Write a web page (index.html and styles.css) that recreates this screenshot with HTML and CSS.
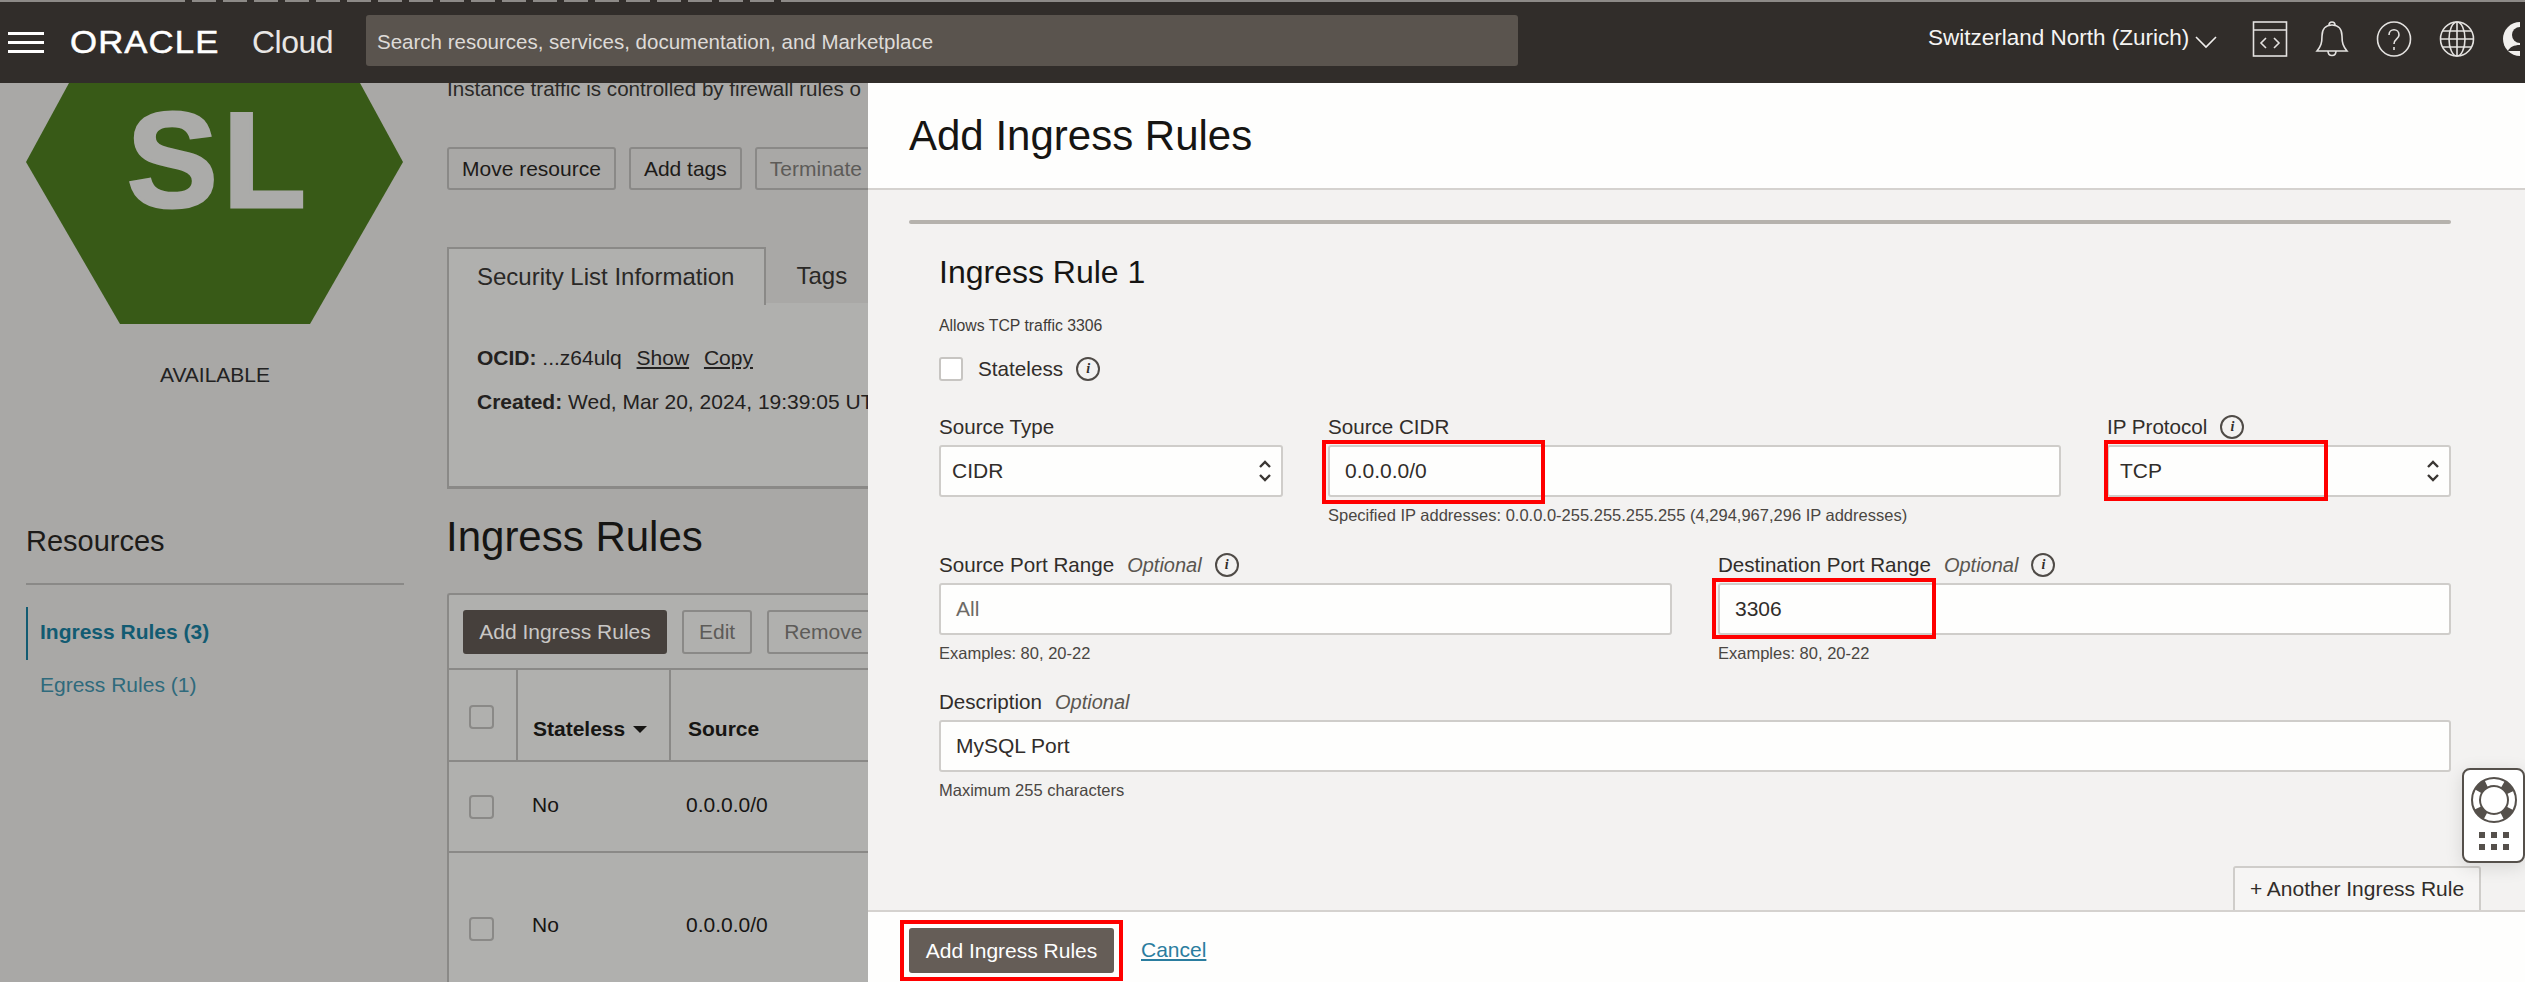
FILE: index.html
```html
<!DOCTYPE html>
<html lang="en">
<head>
<meta charset="utf-8">
<title>Add Ingress Rules</title>
<link rel="stylesheet" href="styles.css">
</head>
<body>
<div class="page">
  <header class="topbar">
    <div class="strip"></div>
    <div class="hamburger"><span></span><span></span><span></span></div>
    <div class="brand"><span class="brand-oracle">ORACLE</span><span class="brand-cloud">Cloud</span></div>
    <div class="search">Search resources, services, documentation, and Marketplace</div>
    <div class="region">Switzerland North (Zurich)
      <svg class="chev" width="22" height="14" viewBox="0 0 22 14"><path d="M1 2l10 10L21 2" fill="none" stroke="#f1efed" stroke-width="1.6"/></svg>
    </div>
    <div class="top-icons">
      <svg width="36" height="38" viewBox="0 0 36 38" fill="none" stroke="#e4e2e0" stroke-width="1.6"><rect x="1.5" y="2" width="33" height="34"/><path d="M1.5 10h33"/><path d="M14 18l-5 5 5 5M22 18l5 5-5 5"/></svg>
      <svg width="34" height="38" viewBox="0 0 34 38" fill="none" stroke="#e4e2e0" stroke-width="1.6"><path d="M2 31c4-5 5-8 5-15 0-7 4-11 10-11s10 4 10 11c0 7 1 10 5 15z"/><path d="M14 5c0-4 6-4 6 0M13 31c0 6 8 6 8 0"/></svg>
      <svg width="36" height="38" viewBox="0 0 36 38" fill="none" stroke="#e4e2e0" stroke-width="1.6"><ellipse cx="18" cy="19" rx="16.5" ry="17"/><path d="M13 15c0-7 10-7 10 0 0 4-5 4-5 9"/><path d="M18 27v3"/></svg>
      <svg width="36" height="38" viewBox="0 0 36 38" fill="none" stroke="#e4e2e0" stroke-width="1.6"><ellipse cx="18" cy="19" rx="16.5" ry="17"/><ellipse cx="18" cy="19" rx="8" ry="17"/><path d="M18 2v34M3 11h30M1.5 19h33M3 27h30"/></svg>
      <svg class="avatar" width="18" height="38" viewBox="0 0 18 38"><circle cx="18" cy="19" r="17" fill="#f1efed"/><circle cx="18" cy="15" r="8" fill="#312d2a"/><path d="M6 31c3-8 20-8 24 0" fill="#312d2a"/></svg>
    </div>
  </header>

  <div class="content">
    <aside class="left">
      <div class="hex-wrap">
        <svg class="hex" width="378" height="241" viewBox="0 0 378 241"><polygon points="43,0 334,0 377,79 284,241 94,241 0,79" fill="#385a17"/></svg>
        <span class="hex-text">SL</span>
      </div>
      <div class="status">AVAILABLE</div>
      <h2 class="res-title">Resources</h2>
      <nav class="res-nav">
        <a class="nav-item active">Ingress Rules (3)</a>
        <a class="nav-item">Egress Rules (1)</a>
      </nav>
    </aside>

    <main class="bg-main">
      <p class="intro">Instance traffic is controlled by firewall rules o</p>
      <div class="actions">
        <span class="btn">Move resource</span>
        <span class="btn">Add tags</span>
        <span class="btn muted">Terminate</span>
      </div>
      <div class="tabs">
        <span class="tab active">Security List Information</span>
        <span class="tab">Tags</span>
      </div>
      <div class="info">
        <p class="info-line"><b>OCID:</b> ...z64ulq <u class="lnk">Show</u> <u class="lnk">Copy</u></p>
        <p class="info-line"><b>Created:</b> Wed, Mar 20, 2024, 19:39:05 UT</p>
      </div>
      <h1 class="bg-h1">Ingress Rules</h1>
      <div class="table-panel">
        <div class="table-tools">
          <span class="btn dark">Add Ingress Rules</span>
          <span class="btn muted small">Edit</span>
          <span class="btn muted small">Remove</span>
        </div>
        <div class="t-row t-head">
          <div class="c c-check"><i class="cb"></i></div>
          <div class="c c-state">Stateless <i class="tri"></i></div>
          <div class="c c-src">Source</div>
        </div>
        <div class="t-row t-one">
          <div class="c c-check"><i class="cb"></i></div>
          <div class="c c-state">No</div>
          <div class="c c-src">0.0.0.0/0</div>
        </div>
        <div class="t-row t-two">
          <div class="c c-check"><i class="cb"></i></div>
          <div class="c c-state">No</div>
          <div class="c c-src">0.0.0.0/0</div>
        </div>
      </div>
    </main>

    <section class="modal">
      <div class="m-head"><h1>Add Ingress Rules</h1></div>
      <div class="m-body">
        <div class="rule-bar"></div>
        <h2 class="rule-title">Ingress Rule 1</h2>
        <p class="rule-sub">Allows TCP traffic 3306</p>
        <div class="stateless"><i class="box"></i><span>Stateless</span><span class="inf">i</span></div>

        <div class="row r3">
          <div class="f"><label>Source Type</label>
            <div class="ctl sel">CIDR<svg class="updown" width="14" height="24" viewBox="0 0 14 24" fill="none" stroke="#3a3633" stroke-width="2.4"><path d="M2 8l5-5 5 5M2 16l5 5 5-5"/></svg></div>
          </div>
          <div class="f"><label>Source CIDR</label>
            <div class="ctl txt"><span class="mark m-cidr"></span>0.0.0.0/0</div>
            <small>Specified IP addresses: 0.0.0.0-255.255.255.255 (4,294,967,296 IP addresses)</small>
          </div>
          <div class="f"><label>IP Protocol<span class="inf">i</span></label>
            <div class="ctl sel"><span class="mark m-ip"></span>TCP<svg class="updown" width="14" height="24" viewBox="0 0 14 24" fill="none" stroke="#3a3633" stroke-width="2.4"><path d="M2 8l5-5 5 5M2 16l5 5 5-5"/></svg></div>
          </div>
        </div>

        <div class="row r2">
          <div class="f"><label>Source Port Range<em>Optional</em><span class="inf">i</span></label>
            <div class="ctl txt ph">All</div>
            <small>Examples: 80, 20-22</small>
          </div>
          <div class="f"><label>Destination Port Range<em>Optional</em><span class="inf">i</span></label>
            <div class="ctl txt"><span class="mark m-port"></span>3306</div>
            <small>Examples: 80, 20-22</small>
          </div>
        </div>

        <div class="f desc"><label>Description<em>Optional</em></label>
          <div class="ctl txt">MySQL Port</div>
          <small>Maximum 255 characters</small>
        </div>

        <div class="another-row"><span class="another">+ Another Ingress Rule</span></div>
      </div>
      <div class="m-foot">
        <span class="submit-wrap"><span class="submit">Add Ingress Rules</span></span>
        <a class="cancel">Cancel</a>
      </div>
      <div class="help-widget">
        <svg width="46" height="46" viewBox="0 0 46 46"><circle cx="23" cy="23" r="18" fill="none" stroke="#55504b" stroke-width="10"/><circle cx="23" cy="23" r="18" fill="none" stroke="#fff" stroke-width="6" stroke-dasharray="17.3 11" stroke-dashoffset="8.65"/></svg>
        <div class="dots"><i></i><i></i><i></i><i></i><i></i><i></i></div>
      </div>
    </section>
  </div>
</div>
</body>
</html>
```
FILE: styles.css
```css
* { box-sizing: border-box; }
html, body { margin: 0; padding: 0; }
body { width: 2527px; height: 985px; overflow: hidden; font-family: "Liberation Sans", Arial, sans-serif; font-size: 21px; color: #161513; background: #fff; }
.page { width: 2525px; height: 982px; display: flex; flex-direction: column; overflow: hidden; background: #a9a8a6; }

.topbar { height: 83px; flex: none; background: #312d2a; padding-top: 2px; display: flex; align-items: center; color: #fff; position: relative; z-index: 3; }
.strip { position: absolute; left: 0; right: 0; top: 0; height: 2px; background-color: #8d8a87; background-image: repeating-linear-gradient(90deg, #312d2a 0 7px, transparent 7px 31px); background-size: 620px 2px; background-position: 185px 0; background-repeat: no-repeat; }
.hamburger { width: 36px; margin-left: 8px; display: flex; flex-direction: column; gap: 6px; }
.hamburger span { height: 3px; background: #fff; display: block; }
.brand { margin-left: 26px; width: 296px; display: flex; align-items: baseline; }
.brand-oracle { font-size: 31px; letter-spacing: 1px; color: #fff; width: 182px; display: block; transform: scaleX(1.12); transform-origin: left center; -webkit-text-stroke: .5px #fff; }
.brand-cloud { font-size: 32px; color: #e8e6e4; letter-spacing: -.5px; }
.search { width: 1152px; height: 51px; background: #5a544e; border-radius: 3px; display: flex; align-items: center; padding: 2px 0 0 11px; color: #dedbd8; font-size: 20.5px; margin-top: -4px; }
.region { margin-left: 410px; width: 300px; font-size: 22.5px; white-space: nowrap; display: flex; align-items: center; gap: 6px; margin-top: -10px; color: #f5f4f3; }
.chev { margin-top: 8px; }
.top-icons { margin-left: 24px; display: flex; gap: 27px; margin-top: -8px; }

.content { flex: 1; display: flex; min-height: 0; }
.left { width: 447px; flex: none; padding-left: 26px; padding-right: 43px; }
.hex-wrap { position: relative; height: 241px; }
.hex { display: block; }
.hex-text { position: absolute; left: 101px; top: 10px; font-size: 136px; line-height: 135px; font-weight: 700; color: #ababa9; letter-spacing: 5px; -webkit-text-stroke: 3px #ababa9; }
.status { text-align: center; margin-top: 40px; line-height: 22px; font-size: 21px; color: #222; }
.res-title { font-weight: 400; font-size: 29px; line-height: 32px; margin: 139px 0 0; padding-bottom: 26px; border-bottom: 2px solid #8a8987; color: #1d1b19; }
.res-nav { margin-top: 22px; display: flex; flex-direction: column; }
.nav-item { height: 53px; line-height: 50px; padding-left: 12px; font-size: 21px; color: #2f6a7c; border-left: 2px solid transparent; }
.nav-item.active { color: #125b72; font-weight: 700; border-left-color: #125b72; }

.bg-main { width: 421px; flex: none; overflow: hidden; }
.intro { margin: -5px 0 0; white-space: nowrap; font-size: 20.6px; line-height: 22px; color: #2a2826; }
.actions { display: flex; gap: 13px; margin-top: 47px; white-space: nowrap; }
.btn { display: inline-flex; align-items: center; justify-content: center; height: 43px; border: 2px solid #8a8987; border-radius: 3px; padding: 0 13px; font-size: 21px; color: #1d1b19; flex: none; }
.btn.muted { color: #5d5b58; }
.btn.small { height: 44px; padding: 0 15px; }
.btn.dark { background: #46403c; border-color: #46403c; color: #c9c7c5; height: 44px; width: 204px; padding: 0; }
.tabs { display: flex; margin-top: 57px; height: 58px; border-bottom: 2px solid #8a8987; font-size: 24px; }
.tab { display: flex; align-items: center; padding: 0 30px; height: 58px; color: #2a2826; white-space: nowrap; }
.tab.active { background: #b0b0ae; border: 2px solid #8a8987; border-bottom: 0; width: 320px; padding-left: 28px; }
.info { background: #b0b0ae; height: 186px; border-left: 2px solid #8a8987; border-bottom: 3px solid #8a8987; padding: 43px 0 0 28px; margin-top: -2px; white-space: nowrap; }
.info-line { margin: 0 0 20px; line-height: 24px; font-size: 21px; color: #232120; }
.lnk { margin-left: 9px; }
.bg-h1 { font-weight: 400; font-size: 42px; line-height: 50px; margin: 23px 0 0 -1px; color: #161513; }
.table-panel { margin-top: 31px; background: #b0b0ae; border-left: 2px solid #8a8987; border-top: 2px solid #8a8987; height: 500px; border-top-left-radius: 3px; }
.table-tools { display: flex; gap: 15px; padding: 15px 0 0 14px; height: 75px; white-space: nowrap; border-bottom: 2px solid #8a8987; }
.t-row { display: flex; border-bottom: 2px solid #8a8987; }
.t-head { height: 92px; font-weight: 700; }
.t-one { height: 91px; }
.t-two { height: 150px; border-bottom: 0; }
.c { display: flex; flex: none; align-items: center; white-space: nowrap; }
.c-check { width: 69px; border-right: 2px solid #8a8987; padding-left: 20px; }
.c-state { width: 153px; border-right: 2px solid #8a8987; padding-left: 15px; gap: 8px; }
.c-src { padding-left: 17px; }
.t-head .c-state, .t-head .c-src { padding-top: 28px; }
.t-head .c-check { padding-top: 3px; }
.t-one .c-check, .t-one .c-state, .t-two .c-check, .t-two .c-state { border-right: 0; }
.t-one .c-state, .t-one .c-src { padding-bottom: 4px; }
.t-one .c-state, .t-two .c-state { padding-left: 14px; }
.t-one .c-src, .t-two .c-src { padding-left: 15px; }
.t-two .c { align-items: flex-start; padding-top: 60px; }
.t-two .c-check { padding-top: 64px; }
.cb { width: 25px; height: 24px; border: 2px solid #8a8987; border-radius: 4px; display: block; }
.tri { width: 0; height: 0; border-left: 7px solid transparent; border-right: 7px solid transparent; border-top: 7px solid #161513; display: block; }

.modal { flex: 1; background: #fefefd; display: flex; flex-direction: column; position: relative; min-width: 0; }
.m-head { height: 107px; border-bottom: 2px solid #d5d2cf; flex: none; padding: 28px 0 0 41px; }
.m-head h1 { margin: 0; font-weight: 400; font-size: 42px; line-height: 50px; color: #161513; }
.m-body { height: 722px; flex: none; background: #f3f2f1; border-bottom: 2px solid #d5d2cf; padding: 30px 74px 0 71px; position: relative; }
.rule-bar { height: 4px; background: #b5b2ad; margin-left: -30px; border-radius: 2px; }
.rule-title { font-weight: 400; font-size: 32px; line-height: 34px; margin: 31px 0 0; color: #161513; }
.rule-sub { margin: 27px 0 0; font-size: 15.8px; line-height: 20px; color: #3f3c39; }
.stateless { display: flex; align-items: center; margin-top: 20px; height: 26px; font-size: 20.7px; color: #312d2a; }
.box { width: 24px; height: 24px; background: #fff; border: 2px solid #c7c5c2; border-radius: 3px; margin-right: 15px; }
.inf { display: inline-flex; width: 24px; height: 24px; border: 2px solid #4f4b47; border-radius: 50%; align-items: center; justify-content: center; font: italic 700 14px "Liberation Serif", serif; margin-left: 13px; color: #312d2a; }
.row { display: flex; }
.r3 { margin-top: 33px; gap: 45px; height: 122px; }
.r3 .f:nth-child(1) { width: 344px; }
.r3 .f:nth-child(2) { width: 733px; }
.r3 .f:nth-child(3) { width: 344px; margin-left: 1px; }
.r2 { margin-top: 16px; gap: 46px; height: 122px; }
.r2 .f { width: 733px; }
.f { display: flex; flex-direction: column; flex: none; position: relative; }
.f label { display: flex; align-items: center; height: 24px; margin-bottom: 6px; font-size: 20.6px; color: #312d2a; white-space: nowrap; }
.f label em { margin-left: 13px; color: #5a5650; font-size: 20px; }
.ctl { height: 52px; background: #fefefd; border: 2px solid #cfcdca; border-radius: 3px; display: flex; align-items: center; font-size: 21px; color: #312d2a; position: relative; }
.sel { padding-left: 11px; justify-content: space-between; padding-right: 9px; }
.txt { padding-left: 15px; }
.ph { color: #6d6a66; }
.f small { font-size: 16.5px; line-height: 20px; margin-top: 8px; color: #4a4642; white-space: nowrap; }
.desc { margin-top: 15px; }
.updown { flex: none; }
.mark { position: absolute; border: 4px solid #ff0000; pointer-events: none; }
.m-cidr { left: -8px; top: -7px; width: 223px; height: 64px; }
.m-ip { left: -5px; top: -7px; width: 224px; height: 61px; }
.m-port { left: -8px; top: -7px; width: 224px; height: 61px; }
.another-row { display: flex; justify-content: flex-end; margin-top: 66px; margin-right: -30px; }
.another { height: 44px; width: 248px; background: #f6f5f4; border: 2px solid #cfcdca; border-bottom: 0; border-radius: 3px 3px 0 0; display: flex; align-items: center; justify-content: center; font-size: 21px; color: #312d2a; }
.m-foot { flex: 1; display: flex; align-items: flex-start; padding: 8px 0 0 32px; gap: 18px; }
.submit-wrap { border: 4px solid #ff0000; padding: 4px 5px; width: 223px; height: 61px; flex: none; display: block; }
.submit { display: flex; align-items: center; justify-content: center; height: 45px; background: #655d57; border-radius: 3px; color: #fff; font-size: 21px; }
.cancel { margin-top: 18px; line-height: 24px; color: #2a7d9f; font-size: 21px; text-decoration: underline; }
.help-widget { position: absolute; left: 1594px; top: 685px; width: 63px; height: 95px; background: #fff; border: 2px solid #55504b; border-radius: 8px; box-shadow: 0 4px 18px rgba(0,0,0,.12); display: flex; flex-direction: column; align-items: center; padding-top: 7px; }
.dots { display: grid; grid-template-columns: repeat(3, 6px); gap: 6px; margin-top: 9px; }
.dots i { width: 6px; height: 6px; background: #55504b; display: block; }
```
